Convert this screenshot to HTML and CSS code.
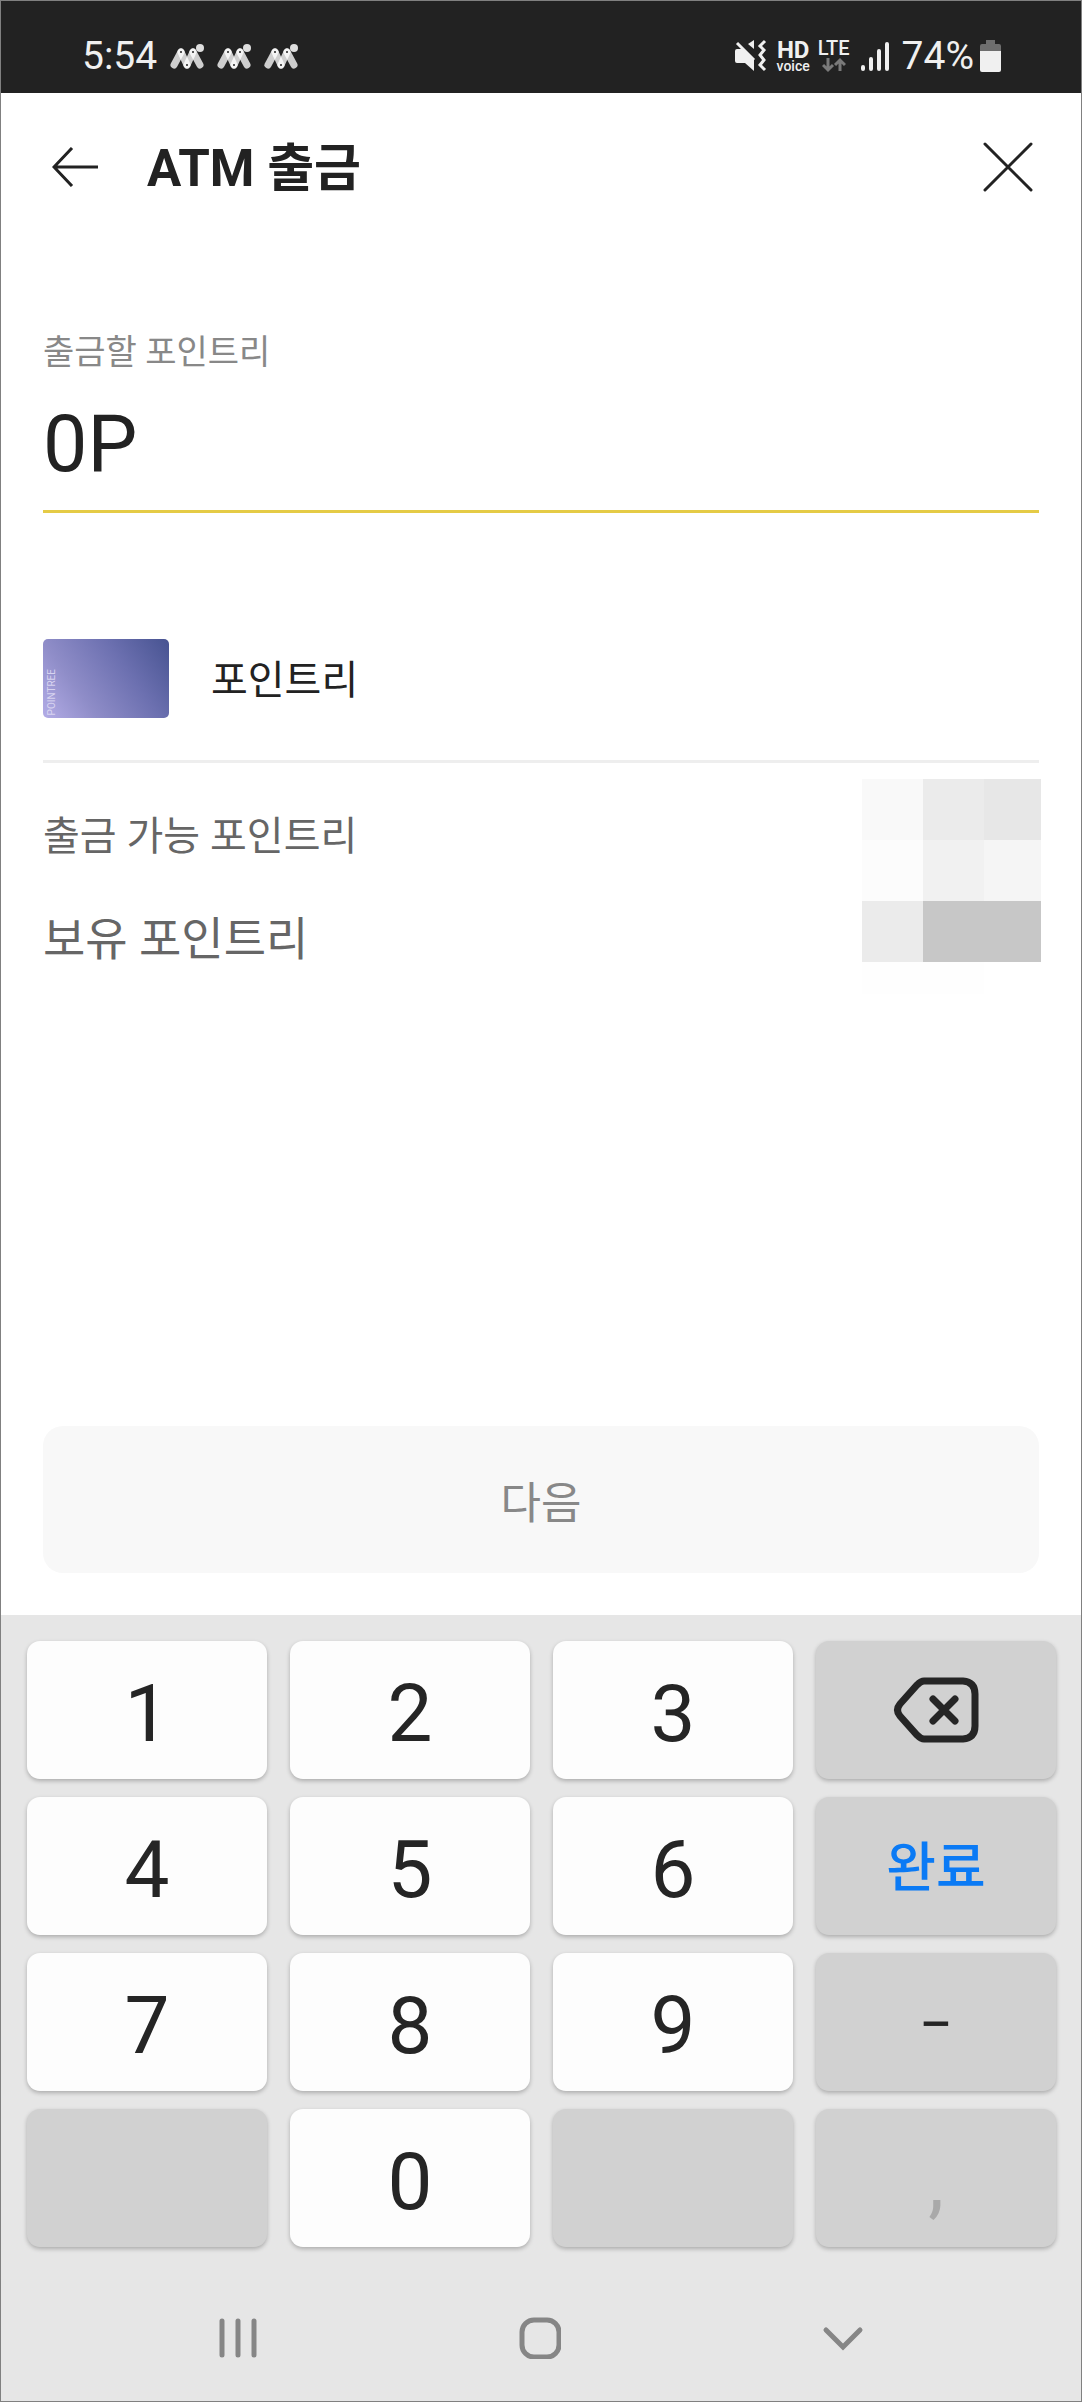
FILE: index.html
```html
<!DOCTYPE html>
<html lang="ko">
<head>
<meta charset="utf-8">
<meta name="viewport" content="width=device-width, initial-scale=1">
<title>ATM 출금</title>
<link rel="stylesheet" href="styles.css">
</head>
<body>
<div class="screen">
  <div class="status-bar">
    <div class="status-left">
      <span class="clock">5:54</span>
      <svg class="app-badge" viewBox="0 0 34 26"><use href="#wave"/></svg>
      <svg class="app-badge" viewBox="0 0 34 26"><use href="#wave"/></svg>
      <svg class="app-badge" viewBox="0 0 34 26"><use href="#wave"/></svg>
    </div>
    <div class="status-right">
      <svg width="33" height="34" viewBox="0 0 33 34" fill="#f0f0f0">
        <path d="M1 12q0-2 2-2h6l11 11v11l-9-8H3q-2 0-2-2z"/>
        <path d="M20 1v9l-6-5z"/>
        <path d="M3 4l17 17" stroke="#f0f0f0" stroke-width="3"/>
        <path d="M31 2l-5 5 4 4-4 5 4 5-4 5 5 5" fill="none" stroke="#f0f0f0" stroke-width="3"/>
      </svg>
      <span class="hd"><b class="hd-top">HD</b><span class="hd-sub">voice</span></span>
      <span class="lte"><span class="lte-top">LTE</span>
        <svg width="24" height="16" viewBox="0 0 24 16" fill="none" stroke="#7a7a7a" stroke-width="3"><path d="M6 1v12M1 8l5 5 5-5M18 14V3M13 8l5-5 5 5"/></svg>
      </span>
      <svg width="28" height="31" viewBox="0 0 28 31" stroke="#f0f0f0" stroke-width="4" stroke-linecap="round"><path d="M2 26v2M10 18v10M18 10v18M26 3v25"/></svg>
      <span class="percent">74%</span>
      <svg class="battery" width="21" height="34" viewBox="0 0 21 34"><path d="M6 1h9v4h4q2 0 2 2v5H0V7q0-2 2-2h4z" fill="#6e6e6e"/><path d="M0 12h21v19q0 2-2 2H2q-2 0-2-2z" fill="#f0f0f0"/></svg>
    </div>
  </div>

  <header class="header">
    <button class="icon-button back" type="button" aria-label="뒤로">
      <svg width="46" height="40" viewBox="0 0 46 40" fill="none" stroke="#222" stroke-width="3"><path d="M20 1L2 20l18 19M2 20h44"/></svg>
    </button>
    <h1 class="title">ATM 출금</h1>
    <button class="icon-button" type="button" aria-label="닫기">
      <svg width="50" height="50" viewBox="0 0 50 50" fill="none" stroke="#222" stroke-width="3" stroke-linecap="round"><path d="M2 2l46 46M48 2L2 48"/></svg>
    </button>
  </header>

  <main class="content">
    <label class="amount-label" for="amount">출금할 포인트리</label>
    <input class="amount" id="amount" type="text" inputmode="numeric" value="0P">

    <div class="card-row">
      <div class="card"><span class="card-name">POINTREE</span></div>
      <span>포인트리</span>
    </div>

    <div class="balances">
      <ul class="balance-names">
        <li class="available">출금 가능 포인트리</li>
        <li class="held">보유 포인트리</li>
      </ul>
      <div class="mosaic">
        <i class="m1"></i><i class="m2"></i><i class="m3"></i>
        <i class="m4"></i><i class="m5"></i><i class="m6"></i>
        <i class="m2"></i><i class="m7"></i><i class="m7"></i>
        <i class="m8"></i><i class="m8"></i><i></i>
      </div>
    </div>

    <button class="next" type="button">다음</button>
  </main>

  <div class="keyboard">
    <div class="keys">
      <button class="key" type="button">1</button>
      <button class="key" type="button">2</button>
      <button class="key" type="button">3</button>
      <button class="key function" type="button" aria-label="지우기">
        <svg width="86" height="66" viewBox="0 0 86 66" fill="none" stroke="#252525" stroke-width="7" stroke-linecap="round"><path d="M31 4H70Q82 5 82 17V49Q82 61 70 62H31Q28 62 24 58L7 39Q2 33 7 27L24 8Q28 4 31 4Z"/><path d="M40 22L62 44M62 22L40 44"/></svg>
      </button>
      <button class="key" type="button">4</button>
      <button class="key" type="button">5</button>
      <button class="key" type="button">6</button>
      <button class="key function done" type="button">완료</button>
      <button class="key" type="button">7</button>
      <button class="key" type="button">8</button>
      <button class="key" type="button">9</button>
      <button class="key function minus" type="button">−</button>
      <button class="key function" type="button" aria-label="빈 키" disabled></button>
      <button class="key" type="button">0</button>
      <button class="key function" type="button" aria-label="빈 키" disabled></button>
      <button class="key function comma" type="button">,</button>
    </div>
    <nav class="nav">
      <button class="icon-button" type="button" aria-label="최근 앱"><svg width="38" height="42" viewBox="0 0 38 42" stroke="#868686" stroke-width="5" stroke-linecap="round"><path d="M3 4v34M19 4v34M35 4v34"/></svg></button>
      <button class="icon-button" type="button" aria-label="홈"><svg width="42" height="42" viewBox="0 0 42 42" fill="none" stroke="#868686" stroke-width="5"><rect x="3" y="3" width="37" height="37" rx="12"/></svg></button>
      <button class="icon-button" type="button" aria-label="키보드 닫기"><svg width="42" height="42" viewBox="0 0 42 42" fill="none" stroke="#868686" stroke-width="5" stroke-linecap="round"><path d="M4 13l17 17 17-17"/></svg></button>
    </nav>
  </div>
</div>

<svg class="defs" aria-hidden="true">
  <symbol id="wave" viewBox="0 0 34 26">
    <g stroke="#fff" stroke-opacity="0.78" stroke-width="7" stroke-linecap="round" fill="none">
      <path d="M4 22L11 9"/><path d="M11 9l6 13"/><path d="M17 22l6-13"/><path d="M23 9l7 13"/>
    </g>
    <circle cx="30" cy="5" r="4" fill="#dedede"/>
    <g fill="#222"><circle cx="11" cy="9" r="1"/><circle cx="23" cy="9" r="1"/><circle cx="17" cy="22" r="1"/></g>
  </symbol>
</svg>
</body>
</html>
```
FILE: styles.css
```css
* { box-sizing: border-box; }

body {
  margin: 0;
  background: #fff;
  color: #222;
  font-family: Roboto, "Noto Sans CJK KR", sans-serif;
}

button, input {
  margin: 0;
  padding: 0;
  border: 0;
  background: none;
  color: inherit;
  font-family: inherit;
}

svg { display: block; flex: none; }

.defs { position: absolute; width: 0; height: 0; }

.screen {
  display: flex;
  flex-direction: column;
  min-height: 100vh;
  border: 1px solid #808080;
}

/* Status bar */
.status-bar {
  display: flex;
  justify-content: space-between;
  align-items: center;
  height: 92px;
  padding: 18px 80px 0 81px;
  background: #222;
  color: #f0f0f0;
}

.status-left, .status-right { display: flex; align-items: center; }
.status-left { gap: 13px; }
.clock { font-size: 39px; line-height: 44px; }
.app-badge { width: 34px; height: 26px; }

.hd { display: flex; flex-direction: column; align-items: center; margin-left: 10px; }
.hd-top { font-size: 24px; line-height: 19px; }
.hd-sub { font-size: 14px; line-height: 12px; font-weight: 500; }
.lte { display: flex; flex-direction: column; align-items: center; margin: 0 11px 0 8px; }
.lte-top { font-size: 20px; line-height: 18px; font-weight: 500; }
.percent { margin-left: 13px; font-size: 39px; line-height: 44px; }
.battery { margin-left: 6px; }

/* Header */
.header {
  display: flex;
  align-items: center;
  height: 147px;
  padding: 0 48px 0 51px;
}

.icon-button { display: flex; align-items: center; justify-content: center; }
.title { flex: 1; margin: 0 0 0 49px; padding-top: 4px; font-size: 51px; line-height: 60px; font-weight: 700; }

/* Content */
.content {
  flex: 1;
  display: flex;
  flex-direction: column;
  padding: 86px 42px 42px;
}

.amount-label { color: #888; font-size: 34px; line-height: 52px; }

.amount {
  width: 100%;
  height: 135px;
  border-bottom: 3px solid #e5cb46;
  font-size: 79px;
  outline: 0;
}

.card-row {
  display: flex;
  align-items: center;
  gap: 42px;
  margin-top: 84px;
  padding: 42px 0;
  border-bottom: 3px solid #eee;
  font-size: 40px;
  line-height: 64px;
}

.card-row > span { padding-top: 4px; }

.card {
  display: flex;
  align-items: flex-end;
  width: 126px;
  height: 79px;
  padding: 3px 4px;
  border-radius: 5px;
  background: linear-gradient(55deg, #b3ace6 0%, #8f8dc8 30%, #6c70b0 65%, #475391 100%);
}

.card-name {
  color: #d8d4f0;
  font-size: 10px;
  line-height: 10px;
  writing-mode: vertical-rl;
  transform: rotate(180deg);
}

.balances {
  display: flex;
  justify-content: space-between;
  margin-right: -2px;
  padding-top: 16px;
}

.balance-names { margin: 0; padding: 2px 0 0; list-style: none; color: #666; }
.available { font-size: 40px; line-height: 112px; }
.held { font-size: 46px; line-height: 92px; }

.mosaic {
  display: grid;
  grid-template-columns: 61px 61px 57px;
  grid-template-rows: 61px 61px 61px 32px;
}

.m1 { background: #f9f9f9; }
.m2 { background: #ebebeb; }
.m3 { background: #e7e7e7; }
.m4 { background: #fcfcfc; }
.m5 { background: #f1f1f1; }
.m6 { background: #f5f5f5; }
.m7 { background: #c7c7c7; }
.m8 { background: #fefefe; }

.next {
  height: 147px;
  margin-top: auto;
  border-radius: 20px;
  background: #f8f8f8;
  color: #888;
  font-size: 44px;
}

/* Keyboard */
.keyboard { background: #e6e6e6; }

.keys {
  display: grid;
  grid-template-columns: repeat(4, 1fr);
  grid-auto-rows: 138px;
  gap: 18px 23px;
  padding: 26px 25px 0 26px;
}

.key {
  display: flex;
  align-items: center;
  justify-content: center;
  border-radius: 13px;
  background: #fdfdfd;
  box-shadow: 0 2px 4px rgba(0, 0, 0, 0.25);
  color: #252525;
  font-size: 80px;
  line-height: 94px;
  padding-top: 8px;
}

.function { background: #d1d1d1; padding-top: 0; }
.done { padding-top: 6px; color: #0a7af5; font-size: 54px; font-weight: 500; }
.minus { padding-top: 6px; font-size: 60px; }
.comma { padding-top: 8px; color: #a9a9a9; }

.nav {
  display: grid;
  grid-template-columns: repeat(3, 1fr);
  height: 154px;
  padding: 28px 87px 0 86px;
}
```
